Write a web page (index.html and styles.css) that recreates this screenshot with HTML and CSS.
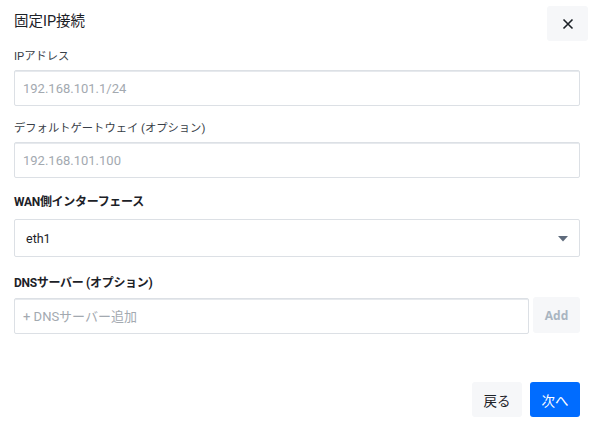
FILE: index.html
```html
<!DOCTYPE html>
<html lang="ja">
<head>
<meta charset="utf-8">
<title>固定IP接続</title>
<link rel="stylesheet" href="styles.css">
</head>
<body>
<div class="dialog">
  <div class="header">
    <h1 class="title">固定IP接続</h1>
    <button class="close" aria-label="close">
      <svg width="12" height="12" viewBox="0 0 12 12"><path d="M1.5 1.5 L10.5 10.5 M10.5 1.5 L1.5 10.5" stroke="#1c2127" stroke-width="1.6" fill="none"/></svg>
    </button>
  </div>
  <div class="body">
    <div class="field f1">
      <label class="label">IPアドレス</label>
      <input class="input" placeholder="192.168.101.1/24">
    </div>
    <div class="field f2">
      <label class="label">デフォルトゲートウェイ (オプション)</label>
      <input class="input" placeholder="192.168.101.100">
    </div>
    <div class="field f3">
      <label class="label bold">WAN側インターフェース</label>
      <div class="select">
        <span>eth1</span>
        <svg width="10" height="6" viewBox="0 0 10 6"><path d="M0 0 H10 L5 5.5 Z" fill="#5f6b7c"/></svg>
      </div>
    </div>
    <div class="field f4">
      <label class="label bold">DNSサーバー (オプション)</label>
      <div class="row">
        <input class="input grow" placeholder="+ DNSサーバー追加">
        <button class="add">Add</button>
      </div>
    </div>
  </div>
  <div class="footer">
    <button class="btn back">戻る</button>
    <button class="btn next">次へ</button>
  </div>
</div>
</body>
</html>
```
FILE: styles.css
```css
* { box-sizing: border-box; }
html, body { margin: 0; padding: 0; background: #fff; }
body {
  font-family: Roboto, "Noto Sans CJK JP", sans-serif;
  color: #1c2127;
  width: 595px;
  height: 434px;
  overflow: hidden;
}
.dialog { display: flex; flex-direction: column; }
.header {
  display: flex;
  justify-content: space-between;
  align-items: center;
  padding: 6px 7px 0 14px;
  height: 41px;
}
.title {
  margin: 0;
  font-size: 14.5px;
  font-weight: 400;
  line-height: 18px;
  color: #1c2127;
  margin-top: -3px;
}
.close {
  width: 41px;
  height: 35px;
  border: none;
  border-radius: 3px;
  background: #f6f7f9;
  display: flex;
  align-items: center;
  justify-content: center;
  padding: 0;
}
.body { padding: 0 15px 0 14px; }
.field { display: flex; flex-direction: column; }
.label {
  font-size: 11.3px;
  line-height: 16px;
  color: #383e47;
  margin-bottom: 5px;
}
.label.bold { font-weight: 700; font-size: 12px; color: #1c2127; letter-spacing: -0.3px; }
.f1 { margin-top: 8px; }
.f2 { margin-top: 15px; }
.f3 { margin-top: 16px; }
.f3 .label { margin-bottom: 9px; }
.f4 { margin-top: 18px; }
.f4 .label { margin-bottom: 7px; }
.input {
  height: 36px;
  border: 1px solid #dce0e5;
  border-radius: 2px;
  padding: 0 8px;
  font-family: Roboto, "Noto Sans CJK JP", sans-serif;
  font-size: 13px;
  color: #1c2127;
  outline: none;
  background: #fff;
  box-shadow: inset 0 1px 0 #e6e9ed;
}
.input::placeholder { color: #a3a9b0; }
.select {
  height: 38px;
  border: 1px solid #dce0e5;
  border-radius: 2px;
  display: flex;
  align-items: center;
  justify-content: space-between;
  padding: 0 11px 0 11px;
  font-size: 12.5px;
  color: #1c2127;
}
.select svg { margin-top: 1px; }
.row { display: flex; gap: 4px; align-items: flex-start; }
.grow { flex: 1; }
.add {
  width: 47px;
  height: 36px;
  margin-top: -1px;
  border: none;
  border-radius: 3px;
  background: #f6f7f9;
  color: #a9b5c1;
  font-family: "Open Sans", sans-serif;
  font-weight: 700;
  font-size: 12px;
  padding: 0;
}
.footer {
  display: flex;
  justify-content: flex-end;
  gap: 8px;
  padding: 0 15px 0 14px;
  margin-top: 48px;
}
.btn {
  width: 50px;
  height: 35px;
  border: none;
  border-radius: 3px;
  font-family: Roboto, "Noto Sans CJK JP", sans-serif;
  font-size: 13.5px;
  padding: 0;
}
.back { background: #f6f7f9; color: #1c2127; }
.next { background: #006cff; color: #fff; }
```
